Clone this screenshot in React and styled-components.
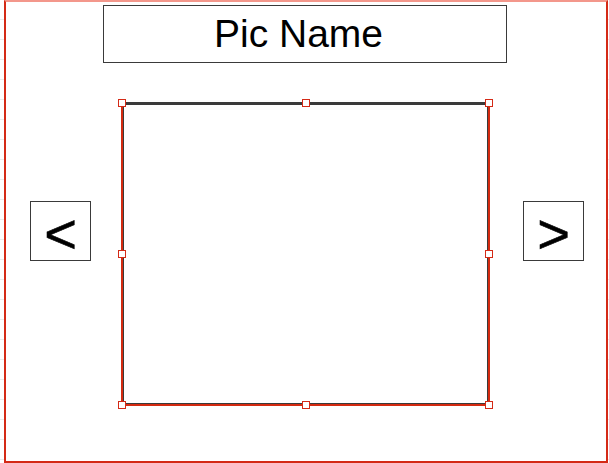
import styled, { createGlobalStyle } from "styled-components";

const GlobalStyle = createGlobalStyle`
  html, body {
    margin: 0;
    padding: 0;
  }
  body {
    width: 609px;
    height: 463px;
    overflow: hidden;
    font-family: "Liberation Sans", Arial, sans-serif;
    background-color: #ffffff;
    background-image: repeating-linear-gradient(
      to bottom,
      transparent 0px,
      transparent 19px,
      #ebebeb 19px,
      #ebebeb 20px
    );
  }
`;

const Canvas = styled.div`
  box-sizing: border-box;
  margin-left: 4px;
  width: 604px;
  height: 463px;
  background: #ffffff;
  border: 2px solid #d42a16;
  border-top-color: #f3978b;
  display: flex;
  flex-direction: column;
  align-items: center;
`;

const TitleBox = styled.div`
  box-sizing: border-box;
  margin-top: 3px;
  margin-right: 3px;
  width: 404px;
  height: 58px;
  border: 1px solid #3a3a3a;
  display: flex;
  align-items: center;
  justify-content: center;
  padding-right: 12px;
  font-size: 39px;
  color: #000;
`;

const Stage = styled.div`
  display: flex;
  align-items: flex-start;
  align-self: stretch;
  margin-top: 39px;
  padding-left: 24px;
`;

const NavButton = styled.div`
  box-sizing: border-box;
  width: 61px;
  height: 60px;
  margin-top: 99px;
  margin-left: ${(p) => p.$offset || 0}px;
  border: 1px solid #3a3a3a;
  display: flex;
  align-items: center;
  justify-content: center;
  font-size: 56px;
  line-height: 1;
  padding-top: 6px;
  color: #000;
  -webkit-text-stroke: 0.6px #000;
`;

const Picture = styled.div`
  position: relative;
  box-sizing: border-box;
  width: 369px;
  height: 304px;
  margin-left: 30px;
  border: 2px solid #d42a10;
  border-top-color: #3a3a3a;
  box-shadow: inset 0 0 0 1px #3a3a3a;
`;

const Handle = styled.span`
  position: absolute;
  box-sizing: border-box;
  width: 8px;
  height: 8px;
  margin-left: -4px;
  margin-top: -4px;
  background: #fff;
  border: 1px solid #d42a16;
`;

const handles = [
  ["-1px", "-1px"],
  ["50%", "-1px"],
  ["calc(100% + 1px)", "-1px"],
  ["-1px", "50%"],
  ["calc(100% + 1px)", "50%"],
  ["-1px", "calc(100% + 1px)"],
  ["50%", "calc(100% + 1px)"],
  ["calc(100% + 1px)", "calc(100% + 1px)"],
];

export default function App() {
  return (
    <>
      <GlobalStyle />
      <Canvas>
        <TitleBox>Pic Name</TitleBox>
        <Stage>
          <NavButton>&lt;</NavButton>
          <Picture>
            {handles.map(([x, y], i) => (
              <Handle key={i} style={{ left: x, top: y }} />
            ))}
          </Picture>
          <NavButton $offset={33}>&gt;</NavButton>
        </Stage>
      </Canvas>
    </>
  );
}
